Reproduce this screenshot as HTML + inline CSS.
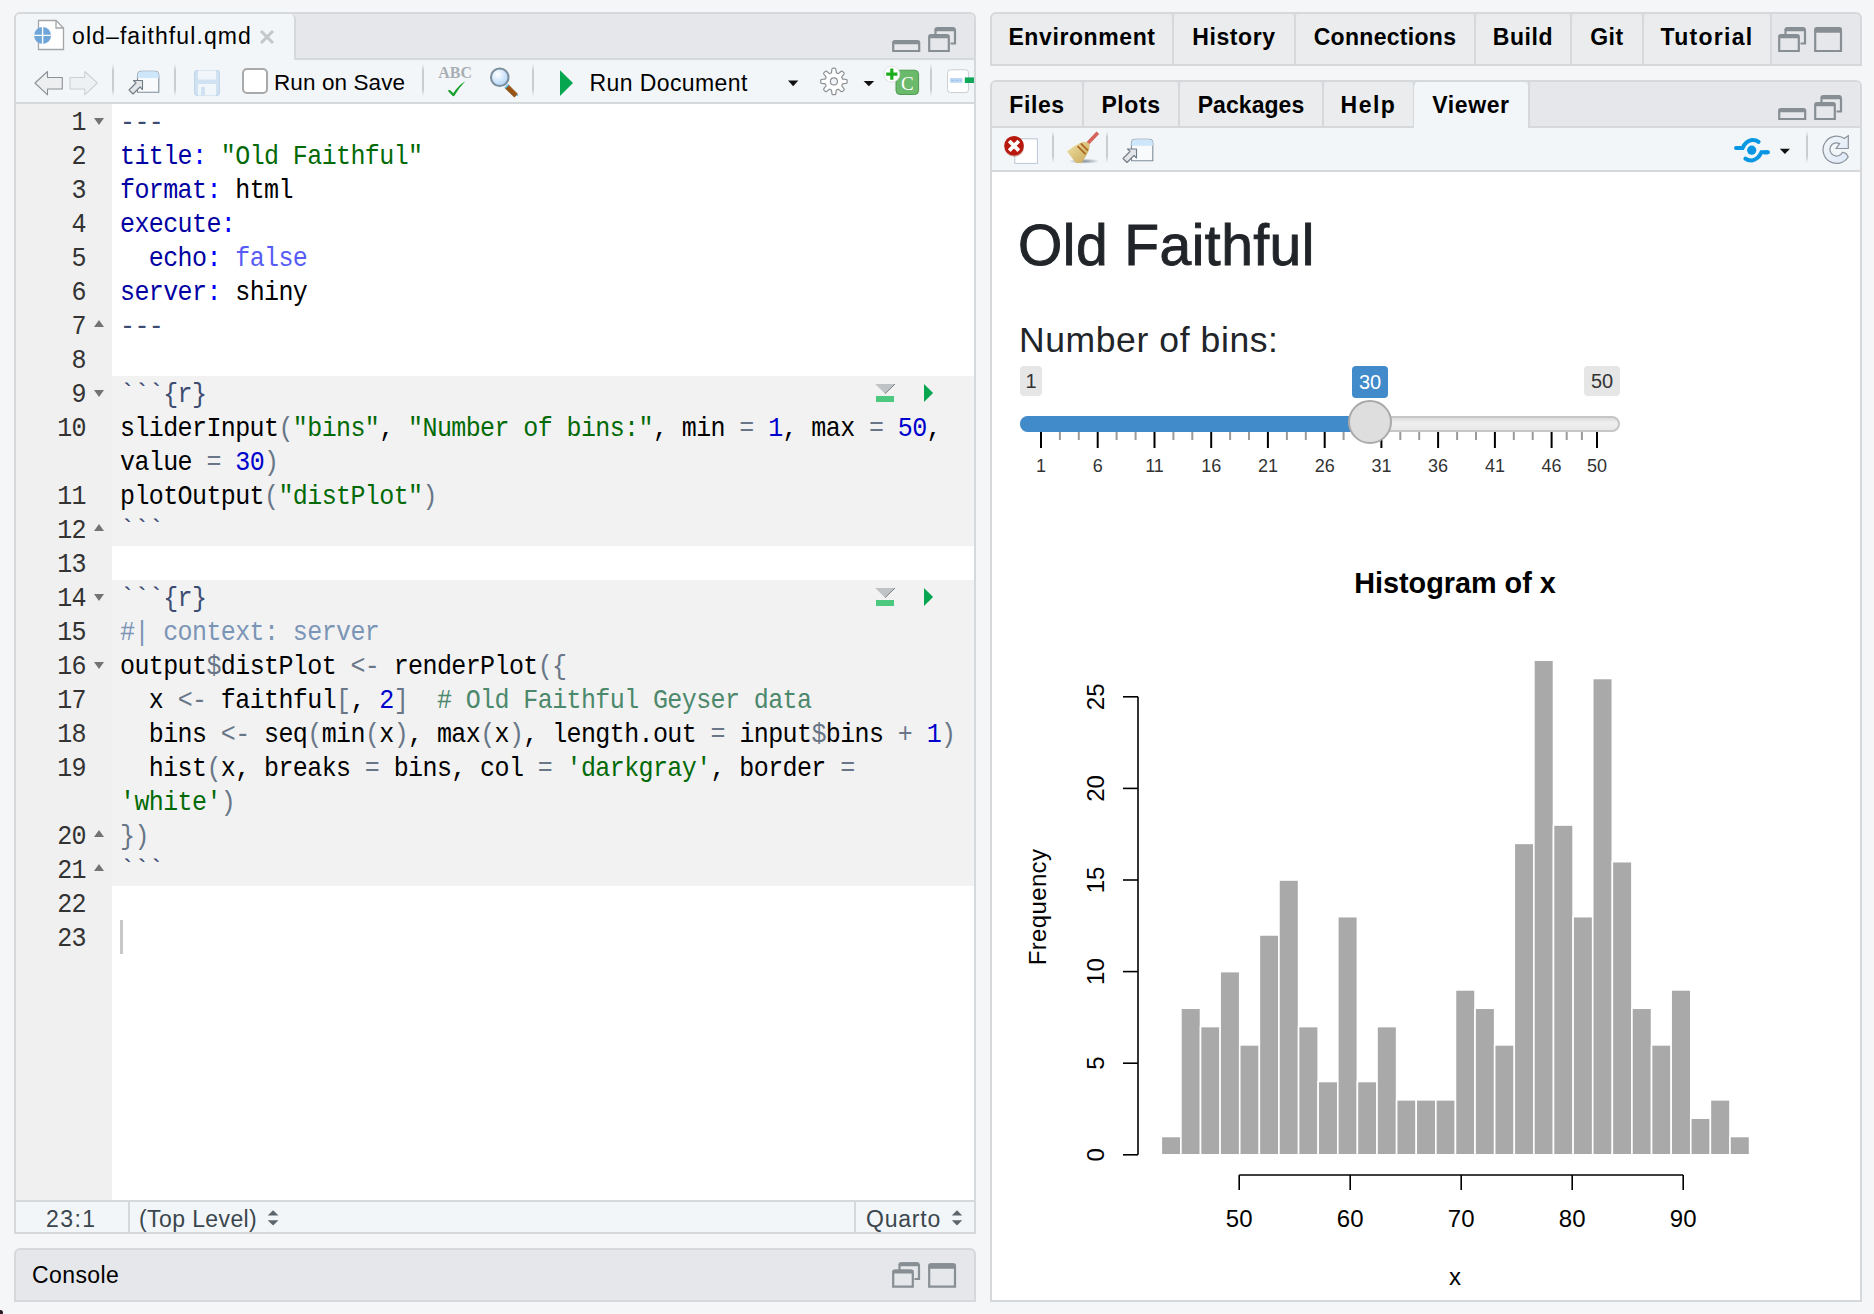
<!DOCTYPE html>
<html><head><meta charset="utf-8">
<style>
*{margin:0;padding:0;box-sizing:border-box}
html,body{width:1874px;height:1314px;overflow:hidden;background:#f5f6f8;font-family:"Liberation Sans",sans-serif;color:#000}
.abs{position:absolute}
.pane{position:absolute;border:2px solid #d5d9dc;border-radius:6px 6px 0 0;overflow:hidden}
.strip{position:absolute;left:0;right:0;top:0;background:#e5e7ea}
.tb{position:absolute;left:0;right:0;background:#f3f6f8}
.hl{position:absolute;left:0;right:0;height:2px;background:#d5d9dc}
.vl{position:absolute;top:0;bottom:0;width:2px;background:#d5d9dc}
.ui{font-size:22px;line-height:26px;white-space:nowrap}
.tab{position:absolute;top:0;height:52px;background:#eaecee;border-radius:5px 5px 0 0;font-weight:bold;font-size:23px;line-height:52px;text-align:center;white-space:nowrap;letter-spacing:0.6px}
.sep{position:absolute;width:2px;background:linear-gradient(#f3f6f8,#c9cdd0 20%,#c9cdd0 80%,#f3f6f8)}
.code{position:absolute;left:120px;margin-top:3px;transform:scaleY(1.12);transform-origin:0 23.65px;font-family:"Liberation Mono",monospace;font-size:25px;letter-spacing:-0.6px;white-space:pre;line-height:34px;height:34px}
.ln{position:absolute;left:16px;margin-top:3px;transform:scaleY(1.12);transform-origin:0 23.65px;width:70px;text-align:right;font-family:"Liberation Mono",monospace;font-size:25px;letter-spacing:-0.6px;line-height:34px;height:34px;color:#333}
.k{color:#0000a2}.p{color:#0000ff}.s{color:#036a07}.n{color:#0000cd}.lang{color:#585cf6}.op{color:#687687}.cb{color:#3c4c72}.cm{color:#4c886b}.cmy{color:#7b95b6}
.fold{position:absolute;left:94px;width:0;height:0;border-left:5px solid transparent;border-right:5px solid transparent;border-top:7px solid #737373}
.fold.up{border-top:0;border-bottom:7px solid #737373}
</style></head>
<body>
<!-- ================= EDITOR PANE ================= -->
<div class="pane" style="left:14px;top:12px;width:962px;height:1222px;background:#fff">
  <div class="strip" style="height:46px"></div>
  <div class="hl" style="top:44px"></div>
  <div class="tab" style="left:0;width:280px;height:46px;background:#f3f6f8;border-radius:4px 5px 0 0;border-right:2px solid #d5d9dc"></div>
  <div class="tb" style="top:46px;height:42px"></div>
  <div class="hl" style="top:88px"></div>
  <div class="abs" style="left:0;top:90px;width:96px;height:1096px;background:#f0f0f0"></div>
  <div class="hl" style="top:1186px"></div>
  <div class="tb" style="top:1188px;height:30px"></div>
  <div class="vl" style="left:112px;top:1188px;bottom:0"></div>
  <div class="vl" style="left:838px;top:1188px;bottom:0"></div>
</div>
<!-- editor tab content -->
<svg class="abs" style="left:30px;top:18px" width="40" height="36" viewBox="30 18 40 36">
  <path d="M38.5 20.5 H56 L63.5 28 V49.5 H38.5 Z" fill="#fff" stroke="#a3a6a9" stroke-width="1.3"/>
  <path d="M56 20.5 V28 H63.5" fill="none" stroke="#a3a6a9" stroke-width="1.3"/>
  <circle cx="42.6" cy="35.4" r="8.5" fill="#6fa6d9"/>
  <path d="M42.6 26.5 V44.3 M33.7 35.4 H51.5" stroke="#fff" stroke-width="1.4"/>
</svg>
<div class="abs ui" style="left:72px;top:22px;font-size:23px;letter-spacing:1.1px;line-height:28px">old–faithful.qmd</div>
<svg class="abs" style="left:258px;top:28px" width="18" height="18" viewBox="0 0 18 18"><path d="M3 3 L15 15 M15 3 L3 15" stroke="#c4c7ca" stroke-width="3"/></svg>
<!-- window controls editor -->
<svg class="abs" style="left:890px;top:24px" width="70" height="32" viewBox="890 24 70 32">
  <path d="M893.2 51 V44 Q893.2 41 896 41 H916.5 Q919.2 41 919.2 44 V51 Z" fill="none" stroke="#878f95" stroke-width="2.2"/>
  <rect x="892.2" y="40.2" width="28" height="4" rx="2" fill="#878f95"/>
  <path d="M935.5 38 V31 Q935.5 28.2 938.5 28.2 H952 Q955 28.2 955 31 V43.5 H950.5" fill="none" stroke="#878f95" stroke-width="2.2"/>
  <rect x="934.5" y="27.2" width="21" height="4" rx="2" fill="#878f95"/>
  <path d="M929.2 51 V38 Q929.2 35.2 932 35.2 H945.8 Q948.8 35.2 948.8 38 V51 Z" fill="#e5e7ea" stroke="#878f95" stroke-width="2.2"/>
  <rect x="928.2" y="34.2" width="21.6" height="4" rx="2" fill="#878f95"/>
</svg>
<!-- toolbar -->
<svg class="abs" style="left:30px;top:66px" width="70" height="34" viewBox="30 66 70 34">
  <path d="M35 83 L47.5 71.5 V77.5 H62.3 V89 H47.5 V94.8 Z" fill="#eceef0" stroke="#8a9096" stroke-width="1.1" stroke-linejoin="round"/>
  <path d="M97.3 83 L84.8 71.5 V77.5 H70 V89 H84.8 V94.8 Z" fill="#eef1f3" stroke="#ccd0d3" stroke-width="1.1" stroke-linejoin="round"/>
</svg>
<div class="sep" style="left:112px;top:64px;height:32px"></div>
<svg class="abs" style="left:124px;top:66px" width="40" height="32" viewBox="124 66 40 32">
  <path d="M137.5 92.3 V75.5 Q137.5 71.3 141.5 71.3 H154.8 Q158.8 71.3 158.8 75.5 V92.3 Z" fill="#f8fafc" stroke="#7f8c98" stroke-width="1.1"/>
  <path d="M137.5 78 V75.5 Q137.5 71.3 141.5 71.3 H154.8 Q158.8 71.3 158.8 75.5 V78 Z" fill="#cde6fa"/>
  <path d="M129 90 L136 83 L133.5 80.5 H142.5 V89.5 L140 87 L133 94 Z" fill="#e3e5e8" stroke="#717b85" stroke-width="1.1" stroke-linejoin="round"/>
</svg>
<div class="sep" style="left:174px;top:64px;height:32px"></div>
<svg class="abs" style="left:190px;top:66px" width="34" height="34" viewBox="190 66 34 34">
  <rect x="194.5" y="70.5" width="25" height="25" rx="2.5" fill="#d0e2f2" stroke="#c0d6ea" stroke-width="1"/>
  <rect x="198" y="70.5" width="18" height="9" fill="#f1f6fb"/>
  <rect x="198" y="84" width="18" height="11.5" fill="#f1f6fb"/>
  <rect x="201" y="87" width="4" height="8.5" fill="#d0e2f2"/>
</svg>
<div class="abs" style="left:242px;top:68px;width:26px;height:26px;border:2.5px solid #a9a9a9;border-radius:5px;background:#fff"></div>
<div class="abs ui" style="left:274px;top:68.5px;font-size:22.5px;letter-spacing:0.1px;line-height:28px">Run on Save</div>
<div class="sep" style="left:422px;top:64px;height:32px"></div>
<svg class="abs" style="left:434px;top:62px" width="44" height="38" viewBox="434 62 44 38">
  <text x="455.2" y="78.3" text-anchor="middle" font-family="Liberation Serif" font-weight="bold" font-size="16" fill="#a9aeb4">ABC</text>
  <path d="M447.6 90.6 Q449.5 89.6 450.6 90.4 L453.3 93.3 Q458 85.5 465.3 81.2 Q459.5 87 454.2 96 Q453 96.4 452.2 95.6 Z" fill="#15a02b"/>
</svg>
<svg class="abs" style="left:486px;top:64px" width="36" height="36" viewBox="486 64 36 36">
  <defs><radialGradient id="mg" cx="0.38" cy="0.33" r="0.75"><stop offset="0" stop-color="#ffffff"/><stop offset="1" stop-color="#a9d0f7"/></radialGradient>
  <linearGradient id="hg" x1="0" y1="1" x2="1" y2="0"><stop offset="0" stop-color="#7a3f05"/><stop offset="0.6" stop-color="#9c5a1c"/><stop offset="1" stop-color="#d5a774"/></linearGradient></defs>
  <path d="M508.3 84.2 L518 93.9 L514.3 97.6 L504.6 87.9 Z" fill="url(#hg)"/>
  <path d="M508.6 84.5 L504.9 88.2" stroke="#5cc6f2" stroke-width="1.6"/>
  <path d="M517.8 94.1 L516.6 95.3 L517.9 96.6 L518.2 94.5 Z" fill="#4dc2f2"/>
  <circle cx="499.75" cy="77.3" r="8.8" fill="url(#mg)" stroke="#7b8e9c" stroke-width="2"/>
</svg>
<div class="sep" style="left:532px;top:64px;height:32px"></div>
<svg class="abs" style="left:556px;top:68px" width="22" height="30" viewBox="556 68 22 30"><path d="M560 70.3 L573 83 L560 96 Z" fill="#06a550"/></svg>
<div class="abs ui" style="left:589.5px;top:69px;font-size:23px;letter-spacing:0.4px;line-height:28px">Run Document</div>
<svg class="abs" style="left:786px;top:78px" width="14" height="10" viewBox="786 78 14 10"><path d="M788 80.4 H798.3 L793.15 86.2 Z" fill="#111"/></svg>
<svg class="abs" style="left:818px;top:66px" width="32" height="32" viewBox="818 66 32 32">
  <path id="gear" fill="#ffffff" stroke="#8d9195" stroke-width="1.2" d="M847.10 81.40 L847.10 81.66 L847.09 81.92 L847.08 82.18 L847.06 82.44 L847.04 82.69 L846.93 82.94 L846.63 83.16 L846.13 83.34 L845.48 83.47 L844.74 83.56 L844.00 83.62 L843.35 83.67 L842.85 83.74 L842.54 83.84 L842.42 83.98 L842.36 84.15 L842.31 84.32 L842.25 84.48 L842.19 84.64 L842.12 84.81 L842.05 84.97 L841.98 85.13 L841.91 85.28 L841.83 85.44 L841.75 85.60 L841.73 85.79 L841.88 86.08 L842.19 86.48 L842.61 86.98 L843.09 87.54 L843.55 88.12 L843.92 88.68 L844.14 89.15 L844.20 89.52 L844.10 89.77 L843.94 89.97 L843.77 90.17 L843.59 90.36 L843.42 90.55 L843.23 90.73 L843.05 90.92 L842.86 91.09 L842.67 91.27 L842.47 91.44 L842.27 91.60 L842.02 91.70 L841.65 91.64 L841.18 91.42 L840.62 91.05 L840.04 90.59 L839.48 90.11 L838.98 89.69 L838.58 89.38 L838.29 89.23 L838.10 89.25 L837.94 89.33 L837.78 89.41 L837.63 89.48 L837.47 89.55 L837.31 89.62 L837.14 89.69 L836.98 89.75 L836.82 89.81 L836.65 89.86 L836.48 89.92 L836.34 90.04 L836.24 90.35 L836.17 90.85 L836.12 91.50 L836.06 92.24 L835.97 92.98 L835.84 93.63 L835.66 94.13 L835.44 94.43 L835.19 94.54 L834.94 94.56 L834.68 94.58 L834.42 94.59 L834.16 94.60 L833.90 94.60 L833.64 94.60 L833.38 94.59 L833.12 94.58 L832.86 94.56 L832.61 94.54 L832.36 94.43 L832.14 94.13 L831.96 93.63 L831.83 92.98 L831.74 92.24 L831.68 91.50 L831.63 90.85 L831.56 90.35 L831.46 90.04 L831.32 89.92 L831.15 89.86 L830.98 89.81 L830.82 89.75 L830.66 89.69 L830.49 89.62 L830.33 89.55 L830.17 89.48 L830.02 89.41 L829.86 89.33 L829.70 89.25 L829.51 89.23 L829.22 89.38 L828.82 89.69 L828.32 90.11 L827.76 90.59 L827.18 91.05 L826.62 91.42 L826.15 91.64 L825.78 91.70 L825.53 91.60 L825.33 91.44 L825.13 91.27 L824.94 91.09 L824.75 90.92 L824.57 90.73 L824.38 90.55 L824.21 90.36 L824.03 90.17 L823.86 89.97 L823.70 89.77 L823.60 89.52 L823.66 89.15 L823.88 88.68 L824.25 88.12 L824.71 87.54 L825.19 86.98 L825.61 86.48 L825.92 86.08 L826.07 85.79 L826.05 85.60 L825.97 85.44 L825.89 85.28 L825.82 85.13 L825.75 84.97 L825.68 84.81 L825.61 84.64 L825.55 84.48 L825.49 84.32 L825.44 84.15 L825.38 83.98 L825.26 83.84 L824.95 83.74 L824.45 83.67 L823.80 83.62 L823.06 83.56 L822.32 83.47 L821.67 83.34 L821.17 83.16 L820.87 82.94 L820.76 82.69 L820.74 82.44 L820.72 82.18 L820.71 81.92 L820.70 81.66 L820.70 81.40 L820.70 81.14 L820.71 80.88 L820.72 80.62 L820.74 80.36 L820.76 80.11 L820.87 79.86 L821.17 79.64 L821.67 79.46 L822.32 79.33 L823.06 79.24 L823.80 79.18 L824.45 79.13 L824.95 79.06 L825.26 78.96 L825.38 78.82 L825.44 78.65 L825.49 78.48 L825.55 78.32 L825.61 78.16 L825.68 77.99 L825.75 77.83 L825.82 77.67 L825.89 77.52 L825.97 77.36 L826.05 77.20 L826.07 77.01 L825.92 76.72 L825.61 76.32 L825.19 75.82 L824.71 75.26 L824.25 74.68 L823.88 74.12 L823.66 73.65 L823.60 73.28 L823.70 73.03 L823.86 72.83 L824.03 72.63 L824.21 72.44 L824.38 72.25 L824.57 72.07 L824.75 71.88 L824.94 71.71 L825.13 71.53 L825.33 71.36 L825.53 71.20 L825.78 71.10 L826.15 71.16 L826.62 71.38 L827.18 71.75 L827.76 72.21 L828.32 72.69 L828.82 73.11 L829.22 73.42 L829.51 73.57 L829.70 73.55 L829.86 73.47 L830.02 73.39 L830.17 73.32 L830.33 73.25 L830.49 73.18 L830.66 73.11 L830.82 73.05 L830.98 72.99 L831.15 72.94 L831.32 72.88 L831.46 72.76 L831.56 72.45 L831.63 71.95 L831.68 71.30 L831.74 70.56 L831.83 69.82 L831.96 69.17 L832.14 68.67 L832.36 68.37 L832.61 68.26 L832.86 68.24 L833.12 68.22 L833.38 68.21 L833.64 68.20 L833.90 68.20 L834.16 68.20 L834.42 68.21 L834.68 68.22 L834.94 68.24 L835.19 68.26 L835.44 68.37 L835.66 68.67 L835.84 69.17 L835.97 69.82 L836.06 70.56 L836.12 71.30 L836.17 71.95 L836.24 72.45 L836.34 72.76 L836.48 72.88 L836.65 72.94 L836.82 72.99 L836.98 73.05 L837.14 73.11 L837.31 73.18 L837.47 73.25 L837.63 73.32 L837.78 73.39 L837.94 73.47 L838.10 73.55 L838.29 73.57 L838.58 73.42 L838.98 73.11 L839.48 72.69 L840.04 72.21 L840.62 71.75 L841.18 71.38 L841.65 71.16 L842.02 71.10 L842.27 71.20 L842.47 71.36 L842.67 71.53 L842.86 71.71 L843.05 71.88 L843.23 72.07 L843.42 72.25 L843.59 72.44 L843.77 72.63 L843.94 72.83 L844.10 73.03 L844.20 73.28 L844.14 73.65 L843.92 74.12 L843.55 74.68 L843.09 75.26 L842.61 75.82 L842.19 76.32 L841.88 76.72 L841.73 77.01 L841.75 77.20 L841.83 77.36 L841.91 77.52 L841.98 77.67 L842.05 77.83 L842.12 77.99 L842.19 78.16 L842.25 78.32 L842.31 78.48 L842.36 78.65 L842.42 78.82 L842.54 78.96 L842.85 79.06 L843.35 79.13 L844.00 79.18 L844.74 79.24 L845.48 79.33 L846.13 79.46 L846.63 79.64 L846.93 79.86 L847.04 80.11 L847.06 80.36 L847.08 80.62 L847.09 80.88 L847.10 81.14 Z M837.40 81.4 A3.5 3.5 0 1 0 830.40 81.4 A3.5 3.5 0 1 0 837.40 81.4 Z" fill-rule="evenodd"/>
</svg>
<svg class="abs" style="left:862px;top:78px" width="14" height="10" viewBox="862 78 14 10"><path d="M863.6 81 H874.2 L868.9 86.3 Z" fill="#111"/></svg>
<svg class="abs" style="left:882px;top:64px" width="40" height="34" viewBox="882 64 40 34">
  <rect x="896" y="70.2" width="22.6" height="24.3" rx="4" fill="#6bb96b" stroke="#4e9a50" stroke-width="1"/>
  <text x="907.4" y="90" text-anchor="middle" font-family="Liberation Serif" font-size="19" fill="#fff">C</text>
  <circle cx="891.8" cy="74.2" r="8" fill="#fff" stroke="#d8dadc" stroke-width="0.8"/>
  <path d="M891.8 68.6 V79.8 M886.2 74.2 H897.4" stroke="#1cad1c" stroke-width="3.2"/>
</svg>
<div class="sep" style="left:930px;top:64px;height:32px"></div>
<svg class="abs" style="left:944px;top:66px" width="30" height="30" viewBox="944 66 30 30">
  <rect x="947.6" y="69.8" width="21" height="22.8" rx="3" fill="#fff" stroke="#c9cdd1" stroke-width="1"/>
  <rect x="950" y="78" width="12.5" height="4.8" fill="#bcd7f5"/>
  <path d="M951.5 80.4 H954 M955.5 80.4 H958 M959.5 80.4 H961" stroke="#9fbde0" stroke-width="1"/>
  <rect x="964.8" y="77.4" width="10" height="5.6" fill="#0fa85a"/>
</svg>

<!-- code -->
<div class="abs" style="left:112px;top:376px;width:862px;height:170px;background:#f2f2f2"></div>
<div class="abs" style="left:112px;top:580px;width:862px;height:306px;background:#f2f2f2"></div>
<div class="abs" style="left:120px;top:920px;width:3px;height:34px;background:#c8c8c8"></div>
<div class="ln" style="top:104px">1</div>
<div class="fold" style="top:118px"></div>
<div class="code" style="top:104px"><span class="cb">---</span></div>
<div class="ln" style="top:138px">2</div>
<div class="code" style="top:138px"><span class="k">title</span><span class="p">:</span> <span class="s">"Old Faithful"</span></div>
<div class="ln" style="top:172px">3</div>
<div class="code" style="top:172px"><span class="k">format</span><span class="p">:</span> html</div>
<div class="ln" style="top:206px">4</div>
<div class="code" style="top:206px"><span class="k">execute</span><span class="p">:</span></div>
<div class="ln" style="top:240px">5</div>
<div class="code" style="top:240px">  <span class="k">echo</span><span class="p">:</span> <span class="lang">false</span></div>
<div class="ln" style="top:274px">6</div>
<div class="code" style="top:274px"><span class="k">server</span><span class="p">:</span> shiny</div>
<div class="ln" style="top:308px">7</div>
<div class="fold up" style="top:320px"></div>
<div class="code" style="top:308px"><span class="cb">---</span></div>
<div class="ln" style="top:342px">8</div>
<div class="ln" style="top:376px">9</div>
<div class="fold" style="top:390px"></div>
<div class="code" style="top:376px"><span class="cb">```{r}</span></div>
<div class="ln" style="top:410px">10</div>
<div class="code" style="top:410px">sliderInput<span class="op">(</span><span class="s">"bins"</span>, <span class="s">"Number of bins:"</span>, min <span class="op">=</span> <span class="n">1</span>, max <span class="op">=</span> <span class="n">50</span>,</div>
<div class="code" style="top:444px">value <span class="op">=</span> <span class="n">30</span><span class="op">)</span></div>
<div class="ln" style="top:478px">11</div>
<div class="code" style="top:478px">plotOutput<span class="op">(</span><span class="s">"distPlot"</span><span class="op">)</span></div>
<div class="ln" style="top:512px">12</div>
<div class="fold up" style="top:524px"></div>
<div class="code" style="top:512px"><span class="cb">```</span></div>
<div class="ln" style="top:546px">13</div>
<div class="ln" style="top:580px">14</div>
<div class="fold" style="top:594px"></div>
<div class="code" style="top:580px"><span class="cb">```{r}</span></div>
<div class="ln" style="top:614px">15</div>
<div class="code" style="top:614px"><span class="cmy">#| context: server</span></div>
<div class="ln" style="top:648px">16</div>
<div class="fold" style="top:662px"></div>
<div class="code" style="top:648px">output<span class="op">$</span>distPlot <span class="op">&lt;-</span> renderPlot<span class="op">({</span></div>
<div class="ln" style="top:682px">17</div>
<div class="code" style="top:682px">  x <span class="op">&lt;-</span> faithful<span class="op">[</span>, <span class="n">2</span><span class="op">]</span>  <span class="cm"># Old Faithful Geyser data</span></div>
<div class="ln" style="top:716px">18</div>
<div class="code" style="top:716px">  bins <span class="op">&lt;-</span> seq<span class="op">(</span>min<span class="op">(</span>x<span class="op">)</span>, max<span class="op">(</span>x<span class="op">)</span>, length.out <span class="op">=</span> input<span class="op">$</span>bins <span class="op">+</span> <span class="n">1</span><span class="op">)</span></div>
<div class="ln" style="top:750px">19</div>
<div class="code" style="top:750px">  hist<span class="op">(</span>x, breaks <span class="op">=</span> bins, col <span class="op">=</span> <span class="s">'darkgray'</span>, border <span class="op">=</span></div>
<div class="code" style="top:784px"><span class="s">'white'</span><span class="op">)</span></div>
<div class="ln" style="top:818px">20</div>
<div class="fold up" style="top:830px"></div>
<div class="code" style="top:818px"><span class="op">})</span></div>
<div class="ln" style="top:852px">21</div>
<div class="fold up" style="top:864px"></div>
<div class="code" style="top:852px"><span class="cb">```</span></div>
<div class="ln" style="top:886px">22</div>
<div class="ln" style="top:920px">23</div>
<!-- console -->
<div class="pane" style="left:14px;top:1248px;width:962px;height:54px;background:#e5e7ea"></div>

<!-- ================= RIGHT TOP PANE ================= -->
<div class="pane" style="left:990px;top:12px;width:872px;height:54px;background:#e5e7ea"></div>

<!-- ================= RIGHT BOTTOM PANE ================= -->
<div class="pane" style="left:990px;top:80px;width:872px;height:1222px;background:#fff">
  <div class="strip" style="height:46px"></div>
  <div class="hl" style="top:44px"></div>
  <div class="tb" style="top:46px;height:42px"></div>
  <div class="hl" style="top:88px"></div>
</div>
<!-- status bar -->
<div class="abs ui" style="left:46px;top:1205px;font-size:23px;letter-spacing:1.4px;line-height:28px;color:#3a464d">23:1</div>
<div class="abs ui" style="left:139px;top:1205px;font-size:23px;letter-spacing:0.4px;line-height:28px;color:#3a464d">(Top Level)</div>
<svg class="abs" style="left:264px;top:1206px" width="18" height="24" viewBox="264 1206 18 24"><path d="M267.7 1215.5 L273.1 1210.2 L278.5 1215.5 Z M267.7 1220.3 L273.1 1225.6 L278.5 1220.3 Z" fill="#5d666c"/></svg>
<div class="abs ui" style="left:866px;top:1205px;font-size:23px;letter-spacing:0.8px;line-height:28px;color:#3a464d">Quarto</div>
<svg class="abs" style="left:948px;top:1206px" width="18" height="24" viewBox="948 1206 18 24"><path d="M951.8 1215.5 L957 1210.2 L962.2 1215.5 Z M951.8 1220.3 L957 1225.6 L962.2 1220.3 Z" fill="#5d666c"/></svg>
<!-- console -->
<div class="abs ui" style="left:32px;top:1261px;font-size:23px;letter-spacing:0.4px;line-height:28px">Console</div>
<svg class="abs" style="left:888px;top:1258px" width="72" height="34" viewBox="888 1258 72 34">
  <path d="M899.5 1273 V1266 Q899.5 1263.3 902.5 1263.3 H916 Q919 1263.3 919 1266 V1279 H914.5" fill="none" stroke="#878f95" stroke-width="2.2"/>
  <rect x="898.5" y="1262.3" width="21" height="4" rx="2" fill="#878f95"/>
  <path d="M893.2 1286.6 V1273.5 Q893.2 1270.6 896 1270.6 H909.8 Q912.8 1270.6 912.8 1273.5 V1286.6 Z" fill="#e5e7ea" stroke="#878f95" stroke-width="2.2"/>
  <rect x="892.2" y="1269.6" width="21.6" height="4" rx="2" fill="#878f95"/>
  <path d="M929.2 1286.6 V1267 Q929.2 1264.3 932 1264.3 H952 Q955 1264.3 955 1267 V1286.6 Z" fill="none" stroke="#878f95" stroke-width="2.2"/>
  <rect x="928.2" y="1263.3" width="27.8" height="5.5" rx="2" fill="#878f95"/>
</svg>
<!-- chunk icons -->
<svg class="abs" style="left:870px;top:380px" width="70" height="26" viewBox="870 380 70 26">
  <path d="M875.2 384 H895 L885.1 393.7 Z" fill="#c0c3c6"/><path d="M885.1 393.7 L895 384" stroke="#6f7378" stroke-width="0.9"/>
  <rect x="876" y="396" width="18" height="6" fill="#4cc97e"/>
  <path d="M924 384.1 L933.1 393 L924 402 Z" fill="#07a54f"/>
</svg>
<svg class="abs" style="left:870px;top:584px" width="70" height="26" viewBox="870 584 70 26">
  <path d="M875.2 588 H895 L885.1 597.7 Z" fill="#c0c3c6"/><path d="M885.1 597.7 L895 588" stroke="#6f7378" stroke-width="0.9"/>
  <rect x="876" y="600" width="18" height="6" fill="#4cc97e"/>
  <path d="M924 588.1 L933.1 597 L924 606 Z" fill="#07a54f"/>
</svg>

<!-- right top pane tabs -->
<div class="abs" style="left:992px;top:14px;width:868px;height:50px;overflow:hidden;border-radius:4px 4px 0 0">
  <div class="tab" style="left:0;width:180px;height:50px;line-height:46px">Environment</div>
  <div class="vl" style="left:180px"></div>
  <div class="tab" style="left:182px;width:120px;height:50px;line-height:46px">History</div>
  <div class="vl" style="left:302px"></div>
  <div class="tab" style="left:304px;width:178px;height:50px;line-height:46px;letter-spacing:0.3px">Connections</div>
  <div class="vl" style="left:482px"></div>
  <div class="tab" style="left:484px;width:94px;height:50px;line-height:46px">Build</div>
  <div class="vl" style="left:578px"></div>
  <div class="tab" style="left:580px;width:70px;height:50px;line-height:46px">Git</div>
  <div class="vl" style="left:650px"></div>
  <div class="tab" style="left:652px;width:126px;height:50px;line-height:46px;letter-spacing:1.3px">Tutorial</div>
  <div class="vl" style="left:778px"></div>
</div>
<svg class="abs" style="left:1774px;top:24px" width="72" height="32" viewBox="1774 24 72 32">
  <path d="M1785.5 38 V31 Q1785.5 28.2 1788.5 28.2 H1802 Q1805 28.2 1805 31 V43.5 H1800.5" fill="none" stroke="#878f95" stroke-width="2.2"/>
  <rect x="1784.5" y="27.2" width="21" height="4" rx="2" fill="#878f95"/>
  <path d="M1779.2 51 V38 Q1779.2 35.2 1782 35.2 H1795.8 Q1798.8 35.2 1798.8 38 V51 Z" fill="#e5e7ea" stroke="#878f95" stroke-width="2.2"/>
  <rect x="1778.2" y="34.2" width="21.6" height="4" rx="2" fill="#878f95"/>
  <path d="M1815.2 51 V31 Q1815.2 28.2 1818 28.2 H1838 Q1841 28.2 1841 31 V51 Z" fill="none" stroke="#878f95" stroke-width="2.2"/>
  <rect x="1814.2" y="27.2" width="27.8" height="5.5" rx="2" fill="#878f95"/>
</svg>
<!-- right bottom pane tabs -->
<div class="abs" style="left:992px;top:82px;width:868px;height:46px;overflow:hidden;border-radius:4px 4px 0 0">
  <div class="tab" style="left:0;width:90px;height:44px;line-height:46px">Files</div>
  <div class="vl" style="left:90px;height:44px"></div>
  <div class="tab" style="left:92px;width:94px;height:44px;line-height:46px">Plots</div>
  <div class="vl" style="left:186px;height:44px"></div>
  <div class="tab" style="left:188px;width:142px;height:44px;line-height:46px;letter-spacing:0.05px">Packages</div>
  <div class="vl" style="left:330px;height:44px"></div>
  <div class="tab" style="left:332px;width:89px;height:44px;line-height:46px;letter-spacing:1.5px">Help</div>
  <div class="vl" style="left:421px;height:44px"></div>
  <div class="tab" style="left:422px;width:114px;height:46px;line-height:46px;background:#f3f6f8">Viewer</div>
  <div class="vl" style="left:536px;height:46px"></div>
</div>
<svg class="abs" style="left:1774px;top:90px" width="72" height="34" viewBox="1774 90 72 34">
  <path d="M1779.2 119 V112 Q1779.2 109 1782 109 H1802.5 Q1805.2 109 1805.2 112 V119 Z" fill="none" stroke="#878f95" stroke-width="2.2"/>
  <rect x="1778.2" y="108.2" width="28" height="4" rx="2" fill="#878f95"/>
  <path d="M1821.5 106 V99 Q1821.5 96.2 1824.5 96.2 H1838 Q1841 96.2 1841 99 V111.5 H1836.5" fill="none" stroke="#878f95" stroke-width="2.2"/>
  <rect x="1820.5" y="95.2" width="21" height="4" rx="2" fill="#878f95"/>
  <path d="M1815.2 119 V106 Q1815.2 103.2 1818 103.2 H1831.8 Q1834.8 103.2 1834.8 106 V119 Z" fill="#e5e7ea" stroke="#878f95" stroke-width="2.2"/>
  <rect x="1814.2" y="102.2" width="21.6" height="4" rx="2" fill="#878f95"/>
</svg>
<!-- viewer toolbar -->
<svg class="abs" style="left:1000px;top:130px" width="44" height="38" viewBox="1000 130 44 38">
  <rect x="1014.8" y="138.8" width="22.6" height="24.6" fill="#fff" stroke="#b9c7d6" stroke-width="1"/>
  <circle cx="1014.3" cy="147" r="9.8" fill="#8a1c14" opacity="0.35"/>
  <circle cx="1014" cy="145.8" r="9.8" fill="#b8190f"/>
  <path d="M1009.2 141 L1018.8 150.6 M1018.8 141 L1009.2 150.6" stroke="#fff" stroke-width="3.8"/>
</svg>
<div class="sep" style="left:1052px;top:131px;height:32px"></div>
<svg class="abs" style="left:1062px;top:128px" width="40" height="38" viewBox="1062 128 40 38">
  <defs><radialGradient id="bsh" cx="0.5" cy="0.5" r="0.5"><stop offset="0" stop-color="#7f8c99"/><stop offset="1" stop-color="#7f8c99" stop-opacity="0"/></radialGradient>
  <linearGradient id="bfill" x1="0" y1="0" x2="1" y2="1"><stop offset="0" stop-color="#efe2a6"/><stop offset="1" stop-color="#c9a85a"/></linearGradient></defs>
  <ellipse cx="1084" cy="161.2" rx="15.5" ry="2.6" fill="url(#bsh)"/>
  <path d="M1088.8 142.3 L1096.6 134" stroke="#d6645a" stroke-width="3.6" stroke-linecap="square"/>
  <path d="M1080 143 Q1086 140.2 1089.5 144 Q1090.6 148.5 1086 156 L1081.5 163 L1076 163 L1067 151.5 Q1072 147 1080 143 Z" fill="url(#bfill)"/>
  <path d="M1080.8 143.3 L1088 150.6 M1077.6 146.2 L1085.6 154.2" stroke="#a8661c" stroke-width="1.7"/>
</svg>
<div class="sep" style="left:1106px;top:131px;height:32px"></div>
<svg class="abs" style="left:1118px;top:134px" width="40" height="32" viewBox="1118 134 40 32">
  <path d="M1131.5 160.8 V143 Q1131.5 139.3 1135.5 139.3 H1149 Q1152.8 139.3 1152.8 143 V160.8 Z" fill="#f8fafc" stroke="#7f8c98" stroke-width="1.1"/>
  <path d="M1131.5 145.8 V143 Q1131.5 139.3 1135.5 139.3 H1149 Q1152.8 139.3 1152.8 143 V145.8 Z" fill="#cde6fa"/>
  <path d="M1123 158.5 L1130 151.5 L1127.5 149 H1136.5 V158 L1134 155.5 L1127 162.5 Z" fill="#e3e5e8" stroke="#717b85" stroke-width="1.1" stroke-linejoin="round"/>
</svg>
<svg class="abs" style="left:1732px;top:134px" width="62" height="32" viewBox="1732 134 62 32">
  <path d="M1736 148 H1742.6 Q1745.8 140.8 1752 140 Q1756 139.8 1758.6 141.8" fill="none" stroke="#0997e3" stroke-width="4" stroke-linecap="round"/>
  <path d="M1736 148 H1740" stroke="#0997e3" stroke-width="4"/>
  <path d="M1768 152.3 H1761.4 Q1758.2 159.6 1752 160.4 Q1748 160.6 1745.4 158.6" fill="none" stroke="#0997e3" stroke-width="4" stroke-linecap="round"/>
  <path d="M1768 152.3 H1764" stroke="#0997e3" stroke-width="4"/>
  <circle cx="1751.7" cy="150.2" r="4.6" fill="#0997e3"/>
  <path d="M1779.8 148.7 H1790 L1784.9 154 Z" fill="#111"/>
</svg>
<div class="sep" style="left:1806px;top:131px;height:32px"></div>
<svg class="abs" style="left:1816px;top:130px" width="38" height="38" viewBox="1816 130 38 38">
  <defs><linearGradient id="rg" x1="0" y1="0" x2="1" y2="1"><stop offset="0" stop-color="#f4f6f9"/><stop offset="1" stop-color="#dde9f8"/></linearGradient></defs>
  <path d="M1844.4 138.6 A13.6 13.6 0 1 0 1848.2 157 Q1846.6 152.6 1842.4 152.4 A6.6 6.6 0 1 1 1839.6 143.6 L1836.2 148.5 H1848.3 V135.6 Z" fill="url(#rg)" stroke="#8b929b" stroke-width="1.2" stroke-linejoin="miter"/>
</svg>

<!-- viewer content -->
<div class="abs" style="left:1018px;top:210px;font-size:57px;letter-spacing:0.45px;line-height:70px;color:#212529;-webkit-text-stroke:0.9px #212529;white-space:nowrap">Old Faithful</div>
<div class="abs" style="left:1019px;top:319px;font-size:35.5px;letter-spacing:0.6px;line-height:42px;color:#212529;white-space:nowrap">Number of bins:</div>
<!-- slider -->
<div class="abs" style="left:1020px;top:366px;width:22px;height:30px;background:#e6e6e6;border-radius:4px;font-size:20px;line-height:30px;text-align:center;color:#333">1</div>
<div class="abs" style="left:1584px;top:366px;width:36px;height:30px;background:#e6e6e6;border-radius:4px;font-size:20px;line-height:30px;text-align:center;color:#333">50</div>
<div class="abs" style="left:1352px;top:366px;width:36px;height:32px;background:#428bca;border-radius:4px;font-size:20px;line-height:32px;text-align:center;color:#fff">30</div>
<div class="abs" style="left:1020px;top:416px;width:600px;height:16px;border-radius:8px;background:linear-gradient(#dcdcdc,#f0f0f0 40%,#e8e8e8);border:2px solid #c6c6c6"></div>
<div class="abs" style="left:1020px;top:416px;width:352px;height:16px;border-radius:8px 0 0 8px;background:#428bca"></div>
<svg class="abs" style="left:1010px;top:428px" width="620" height="52" viewBox="1010 428 620 52"><path d="M1041.0 432 V448" stroke="#000" stroke-width="2"/><text x="1041.0" y="472" text-anchor="middle" font-size="18" font-family="Liberation Sans" fill="#333">1</text><path d="M1097.7 432 V448" stroke="#000" stroke-width="2"/><text x="1097.7" y="472" text-anchor="middle" font-size="18" font-family="Liberation Sans" fill="#333">6</text><path d="M1154.5 432 V448" stroke="#000" stroke-width="2"/><text x="1154.5" y="472" text-anchor="middle" font-size="18" font-family="Liberation Sans" fill="#333">11</text><path d="M1211.2 432 V448" stroke="#000" stroke-width="2"/><text x="1211.2" y="472" text-anchor="middle" font-size="18" font-family="Liberation Sans" fill="#333">16</text><path d="M1267.9 432 V448" stroke="#000" stroke-width="2"/><text x="1267.9" y="472" text-anchor="middle" font-size="18" font-family="Liberation Sans" fill="#333">21</text><path d="M1324.7 432 V448" stroke="#000" stroke-width="2"/><text x="1324.7" y="472" text-anchor="middle" font-size="18" font-family="Liberation Sans" fill="#333">26</text><path d="M1381.4 432 V448" stroke="#000" stroke-width="2"/><text x="1381.4" y="472" text-anchor="middle" font-size="18" font-family="Liberation Sans" fill="#333">31</text><path d="M1438.1 432 V448" stroke="#000" stroke-width="2"/><text x="1438.1" y="472" text-anchor="middle" font-size="18" font-family="Liberation Sans" fill="#333">36</text><path d="M1494.9 432 V448" stroke="#000" stroke-width="2"/><text x="1494.9" y="472" text-anchor="middle" font-size="18" font-family="Liberation Sans" fill="#333">41</text><path d="M1551.6 432 V448" stroke="#000" stroke-width="2"/><text x="1551.6" y="472" text-anchor="middle" font-size="18" font-family="Liberation Sans" fill="#333">46</text><path d="M1597.0 432 V448" stroke="#000" stroke-width="2"/><text x="1597.0" y="472" text-anchor="middle" font-size="18" font-family="Liberation Sans" fill="#333">50</text><path d="M1059.9 432 V440" stroke="#9a9a9a" stroke-width="2"/><path d="M1078.8 432 V440" stroke="#9a9a9a" stroke-width="2"/><path d="M1116.6 432 V440" stroke="#9a9a9a" stroke-width="2"/><path d="M1135.6 432 V440" stroke="#9a9a9a" stroke-width="2"/><path d="M1173.4 432 V440" stroke="#9a9a9a" stroke-width="2"/><path d="M1192.3 432 V440" stroke="#9a9a9a" stroke-width="2"/><path d="M1230.1 432 V440" stroke="#9a9a9a" stroke-width="2"/><path d="M1249.0 432 V440" stroke="#9a9a9a" stroke-width="2"/><path d="M1286.9 432 V440" stroke="#9a9a9a" stroke-width="2"/><path d="M1305.8 432 V440" stroke="#9a9a9a" stroke-width="2"/><path d="M1343.6 432 V440" stroke="#9a9a9a" stroke-width="2"/><path d="M1362.5 432 V440" stroke="#9a9a9a" stroke-width="2"/><path d="M1400.3 432 V440" stroke="#9a9a9a" stroke-width="2"/><path d="M1419.2 432 V440" stroke="#9a9a9a" stroke-width="2"/><path d="M1457.1 432 V440" stroke="#9a9a9a" stroke-width="2"/><path d="M1476.0 432 V440" stroke="#9a9a9a" stroke-width="2"/><path d="M1513.8 432 V440" stroke="#9a9a9a" stroke-width="2"/><path d="M1532.7 432 V440" stroke="#9a9a9a" stroke-width="2"/><path d="M1566.7 432 V440" stroke="#9a9a9a" stroke-width="2"/><path d="M1581.9 432 V440" stroke="#9a9a9a" stroke-width="2"/></svg>
<div class="abs" style="left:1348px;top:400px;width:44px;height:44px;border-radius:50%;background:#dedede;border:2px solid #a9a9a9"></div>
<svg class="abs" style="left:992px;top:172px" width="868" height="1128" viewBox="992 172 868 1128">
<rect x="1161.30" y="1136.48" width="19.61" height="18.32" fill="#a9a9a9" stroke="#fff" stroke-width="1.6"/>
<rect x="1180.91" y="1008.24" width="19.61" height="146.56" fill="#a9a9a9" stroke="#fff" stroke-width="1.6"/>
<rect x="1200.52" y="1026.56" width="19.61" height="128.24" fill="#a9a9a9" stroke="#fff" stroke-width="1.6"/>
<rect x="1220.13" y="971.60" width="19.61" height="183.20" fill="#a9a9a9" stroke="#fff" stroke-width="1.6"/>
<rect x="1239.74" y="1044.88" width="19.61" height="109.92" fill="#a9a9a9" stroke="#fff" stroke-width="1.6"/>
<rect x="1259.35" y="934.96" width="19.61" height="219.84" fill="#a9a9a9" stroke="#fff" stroke-width="1.6"/>
<rect x="1278.96" y="880.00" width="19.61" height="274.80" fill="#a9a9a9" stroke="#fff" stroke-width="1.6"/>
<rect x="1298.57" y="1026.56" width="19.61" height="128.24" fill="#a9a9a9" stroke="#fff" stroke-width="1.6"/>
<rect x="1318.18" y="1081.52" width="19.61" height="73.28" fill="#a9a9a9" stroke="#fff" stroke-width="1.6"/>
<rect x="1337.79" y="916.64" width="19.61" height="238.16" fill="#a9a9a9" stroke="#fff" stroke-width="1.6"/>
<rect x="1357.40" y="1081.52" width="19.61" height="73.28" fill="#a9a9a9" stroke="#fff" stroke-width="1.6"/>
<rect x="1377.01" y="1026.56" width="19.61" height="128.24" fill="#a9a9a9" stroke="#fff" stroke-width="1.6"/>
<rect x="1396.62" y="1099.84" width="19.61" height="54.96" fill="#a9a9a9" stroke="#fff" stroke-width="1.6"/>
<rect x="1416.23" y="1099.84" width="19.61" height="54.96" fill="#a9a9a9" stroke="#fff" stroke-width="1.6"/>
<rect x="1435.84" y="1099.84" width="19.61" height="54.96" fill="#a9a9a9" stroke="#fff" stroke-width="1.6"/>
<rect x="1455.45" y="989.92" width="19.61" height="164.88" fill="#a9a9a9" stroke="#fff" stroke-width="1.6"/>
<rect x="1475.06" y="1008.24" width="19.61" height="146.56" fill="#a9a9a9" stroke="#fff" stroke-width="1.6"/>
<rect x="1494.67" y="1044.88" width="19.61" height="109.92" fill="#a9a9a9" stroke="#fff" stroke-width="1.6"/>
<rect x="1514.28" y="843.36" width="19.61" height="311.44" fill="#a9a9a9" stroke="#fff" stroke-width="1.6"/>
<rect x="1533.89" y="660.16" width="19.61" height="494.64" fill="#a9a9a9" stroke="#fff" stroke-width="1.6"/>
<rect x="1553.50" y="825.04" width="19.61" height="329.76" fill="#a9a9a9" stroke="#fff" stroke-width="1.6"/>
<rect x="1573.11" y="916.64" width="19.61" height="238.16" fill="#a9a9a9" stroke="#fff" stroke-width="1.6"/>
<rect x="1592.72" y="678.48" width="19.61" height="476.32" fill="#a9a9a9" stroke="#fff" stroke-width="1.6"/>
<rect x="1612.33" y="861.68" width="19.61" height="293.12" fill="#a9a9a9" stroke="#fff" stroke-width="1.6"/>
<rect x="1631.94" y="1008.24" width="19.61" height="146.56" fill="#a9a9a9" stroke="#fff" stroke-width="1.6"/>
<rect x="1651.55" y="1044.88" width="19.61" height="109.92" fill="#a9a9a9" stroke="#fff" stroke-width="1.6"/>
<rect x="1671.16" y="989.92" width="19.61" height="164.88" fill="#a9a9a9" stroke="#fff" stroke-width="1.6"/>
<rect x="1690.77" y="1118.16" width="19.61" height="36.64" fill="#a9a9a9" stroke="#fff" stroke-width="1.6"/>
<rect x="1710.38" y="1099.84" width="19.61" height="54.96" fill="#a9a9a9" stroke="#fff" stroke-width="1.6"/>
<rect x="1729.99" y="1136.48" width="19.61" height="18.32" fill="#a9a9a9" stroke="#fff" stroke-width="1.6"/>
<path d="M1138 696.80 V1154.80" stroke="#000" stroke-width="1.6" fill="none"/>
<path d="M1123 1154.80 H1138" stroke="#000" stroke-width="1.6"/>
<text transform="translate(1104 1154.80) rotate(-90)" text-anchor="middle" font-size="24" font-family="Liberation Sans" fill="#000">0</text>
<path d="M1123 1063.20 H1138" stroke="#000" stroke-width="1.6"/>
<text transform="translate(1104 1063.20) rotate(-90)" text-anchor="middle" font-size="24" font-family="Liberation Sans" fill="#000">5</text>
<path d="M1123 971.60 H1138" stroke="#000" stroke-width="1.6"/>
<text transform="translate(1104 971.60) rotate(-90)" text-anchor="middle" font-size="24" font-family="Liberation Sans" fill="#000">10</text>
<path d="M1123 880.00 H1138" stroke="#000" stroke-width="1.6"/>
<text transform="translate(1104 880.00) rotate(-90)" text-anchor="middle" font-size="24" font-family="Liberation Sans" fill="#000">15</text>
<path d="M1123 788.40 H1138" stroke="#000" stroke-width="1.6"/>
<text transform="translate(1104 788.40) rotate(-90)" text-anchor="middle" font-size="24" font-family="Liberation Sans" fill="#000">20</text>
<path d="M1123 696.80 H1138" stroke="#000" stroke-width="1.6"/>
<text transform="translate(1104 696.80) rotate(-90)" text-anchor="middle" font-size="24" font-family="Liberation Sans" fill="#000">25</text>
<path d="M1239.20 1175 H1683.20" stroke="#000" stroke-width="1.6" fill="none"/>
<path d="M1239.20 1175 V1190" stroke="#000" stroke-width="1.6"/>
<text x="1239.20" y="1227" text-anchor="middle" font-size="24" font-family="Liberation Sans" fill="#000">50</text>
<path d="M1350.20 1175 V1190" stroke="#000" stroke-width="1.6"/>
<text x="1350.20" y="1227" text-anchor="middle" font-size="24" font-family="Liberation Sans" fill="#000">60</text>
<path d="M1461.20 1175 V1190" stroke="#000" stroke-width="1.6"/>
<text x="1461.20" y="1227" text-anchor="middle" font-size="24" font-family="Liberation Sans" fill="#000">70</text>
<path d="M1572.20 1175 V1190" stroke="#000" stroke-width="1.6"/>
<text x="1572.20" y="1227" text-anchor="middle" font-size="24" font-family="Liberation Sans" fill="#000">80</text>
<path d="M1683.20 1175 V1190" stroke="#000" stroke-width="1.6"/>
<text x="1683.20" y="1227" text-anchor="middle" font-size="24" font-family="Liberation Sans" fill="#000">90</text>
<text x="1455" y="1285" text-anchor="middle" font-size="24" font-family="Liberation Sans">x</text>
<text transform="translate(1046 907) rotate(-90)" text-anchor="middle" font-size="24" letter-spacing="0.35" font-family="Liberation Sans">Frequency</text>
<text x="1455" y="593" text-anchor="middle" font-size="28.8" font-weight="bold" font-family="Liberation Sans">Histogram of x</text>
</svg>
<div class="abs" style="left:-2px;top:1310px;width:5px;height:6px;border-radius:50%;background:#2a1a2a"></div>
</body></html>
